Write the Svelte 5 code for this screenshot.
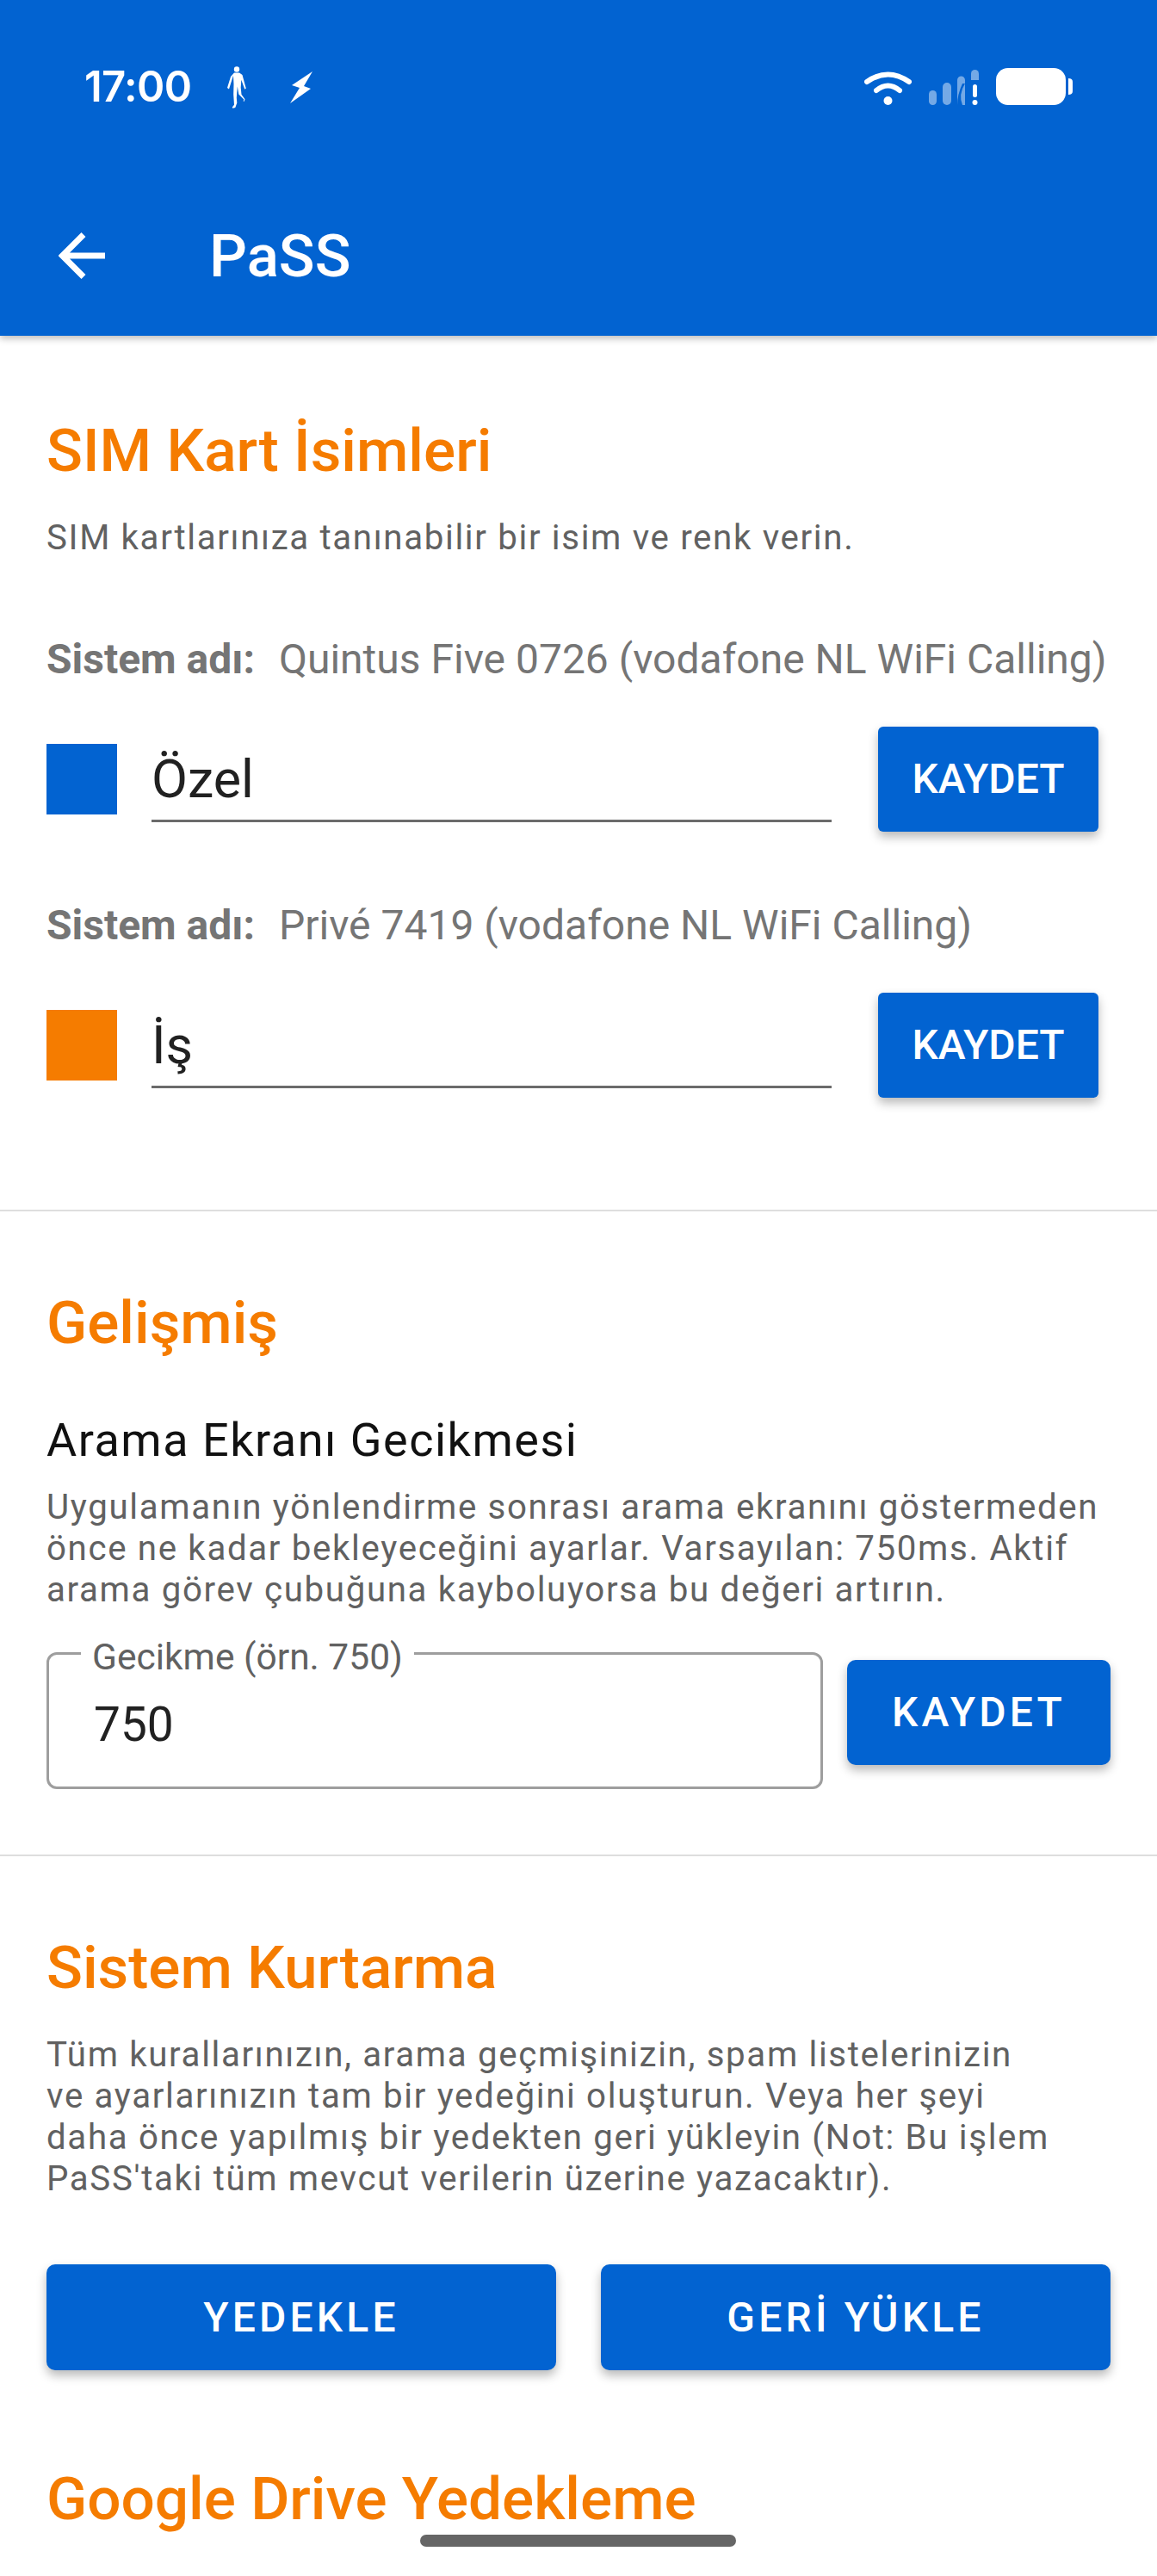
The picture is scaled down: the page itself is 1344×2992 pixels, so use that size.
<script>
  const sims = [
    { name: 'Quintus Five 0726 (vodafone NL WiFi Calling)', color: '#0263d1', value: 'Özel' },
    { name: 'Privé 7419 (vodafone NL WiFi Calling)', color: '#f57c00', value: 'İş' }
  ];
</script>

<div class="page">
  <header class="appbar">
    <div class="status">
      <span class="clock">17:00</span>
      <svg class="walker" width="24" height="52" viewBox="0 0 24 52" fill="#fff"><circle cx="12" cy="3.5" r="3.2"/><path d="M9 7.5h6l3.5 2.5 3.500 13 .8 2.5-1.500 1.200-4-11-.6 9 .8 8 4 5.500-1 2.800-.8-.6.6-2-6-6-1.500-9-1 13 .5 6-2 5.500-3 .8-.5-1.200 2.200-2.800-.8-12 .3-12-.5-10L3 26.500 1 25l4-13z"/></svg>
      <svg class="bolt" width="26" height="37" viewBox="0 0 26 37" fill="#fff"><path d="M26 0 2 16l9 3L0 37l24-17-8-3z"/></svg>
      <span class="spacer"></span>
      <svg class="wifi" width="55" height="41" viewBox="0 0 55 41" fill="none" stroke="#fff" stroke-linecap="round"><path d="M3 14Q27.500-3 52 14" stroke-width="6"/><path d="M14 24Q27.500 13 41 24" stroke-width="6"/><circle cx="27.500" cy="36" r="5" fill="#fff" stroke="none"/></svg>
      <svg class="signal" width="58" height="41" viewBox="0 0 58 41"><g fill="#fff" fill-opacity=".45"><rect x="0" y="24" width="9" height="17" rx="4.500"/><rect x="16" y="15" width="10" height="26" rx="5"/><path d="M33 12a4.500 4.500 0 0 1 9 0v29h-3q-5-12 3-25h-3q-6 13-6 25z"/><path d="M49 12V4.500a4.500 4.500 0 0 1 9 0V12z"/></g><rect x="51" y="17" width="5" height="15" rx="2.500" fill="#fff"/><circle cx="53.500" cy="38" r="3" fill="#fff"/></svg>
      <svg class="battery" width="89" height="43" viewBox="0 0 89 43" fill="#fff"><rect x="0" y="0" width="81" height="43" rx="14"/><path d="M84 12q5 0 5 4v11q0 4-5 4z"/></svg>
    </div>
    <div class="toolbar">
      <svg class="back" width="56" height="54" viewBox="0 0 56 54" fill="none" stroke="#fff" stroke-width="7"><path d="M54 27H5M29 2.500 4.500 27 29 51.500"/></svg>
      <h1>PaSS</h1>
    </div>
  </header>

  <section class="sim">
    <h2>SIM Kart İsimleri</h2>
    <p class="desc first">SIM kartlarınıza tanınabilir bir isim ve renk verin.</p>
    {#each sims as sim}
      <div class="sysname"><b>Sistem adı:</b><span>{sim.name}</span></div>
      <div class="simrow">
        <span class="swatch" style:background={sim.color}></span>
        <input class="line" value={sim.value} />
        <button class="btn small">KAYDET</button>
      </div>
    {/each}
  </section>

  <section class="adv">
    <h2>Gelişmiş</h2>
    <h3>Arama Ekranı Gecikmesi</h3>
    <p class="desc">Uygulamanın yönlendirme sonrası arama ekranını göstermeden önce ne kadar bekleyeceğini ayarlar. Varsayılan: 750ms. Aktif arama görev çubuğuna kayboluyorsa bu değeri artırın.</p>
    <div class="delay">
      <fieldset>
        <legend>Gecikme (örn. 750)</legend>
        <input value="750" />
      </fieldset>
      <button class="btn wide">KAYDET</button>
    </div>
  </section>

  <section class="rec">
    <h2>Sistem Kurtarma</h2>
    <p class="desc narrow">Tüm kurallarınızın, arama geçmişinizin, spam listelerinizin ve ayarlarınızın tam bir yedeğini oluşturun. Veya her şeyi daha önce yapılmış bir yedekten geri yükleyin (Not: Bu işlem PaSS'taki tüm mevcut verilerin üzerine yazacaktır).</p>
    <div class="pair">
      <button class="btn wide">YEDEKLE</button>
      <button class="btn wide">GERİ YÜKLE</button>
    </div>
    <h2 class="drive">Google Drive Yedekleme</h2>
  </section>

  <div class="pill"></div>
</div>

<style>
  :global(body) { margin: 0; background: #fff; }
  .page { position: relative; width: 1344px; height: 2992px; overflow: hidden; background: #fff; font-family: Roboto, "Liberation Sans", sans-serif; }
  .appbar { background: #0263d1; height: 390px; box-shadow: 0 3px 8px rgba(0,0,0,.28); position: relative; }
  .status { height: 210px; display: flex; align-items: flex-start; padding: 0 98px 0 98px; box-sizing: border-box; position: relative; }
  .clock { font: 600 49px/1 Inter, sans-serif; color: #fff; margin-top: 76px; letter-spacing: -.6px; width: 165px; }
  .walker { margin-top: 77px; }
  .bolt { margin: 83px 0 0 50px; }
  .spacer { flex: 1; }
  .wifi { margin-top: 81px; margin-right: 20px; }
  .signal { margin-top: 81px; margin-right: 20px; }
  .battery { margin-top: 79px; }
  .toolbar { height: 180px; display: flex; align-items: center; padding-left: 68px; margin-top: -3px; }
  .back { flex: none; }
  h1 { margin: 0 0 0 119px; font: 500 69px/1 Roboto, sans-serif; color: #fff; }
  h2 { margin: 0; font: 500 69.3px/76px Roboto, sans-serif; color: #f57c00; }
  section { padding: 0 54px; box-sizing: border-box; }
  .sim { height: 1017px; padding-top: 96px; border-bottom: 2px solid #dedede; }
  .desc { margin: 0; font: 400 40.25px/48px Roboto, sans-serif; letter-spacing: 1.65px; color: #616161; }
  .desc.first { margin-top: 39px; }
  .sysname { display: flex; gap: 28px; font: 400 48px/56px Roboto, sans-serif; color: #757575; }
  .sysname b { font-weight: 700; }
  .sim .first + .sysname { margin-top: 89px; }
  .simrow { display: flex; align-items: center; margin: 50px 0 81px; height: 122px; position: relative; }
  .swatch { width: 82px; height: 82px; flex: none; }
  .line { width: 790px; margin-left: 40px; height: 90px; box-sizing: border-box; padding: 0 0 8px; border: 0; border-bottom: 3px solid #6b6b6b; font: 400 61px/1 Roboto, sans-serif; color: #212121; background: none; outline: none; position: relative; top: 5px; }
  .btn { border: 0; background: #0263d1; color: #fff; border-radius: 6px; font: 500 48px/1 Roboto, sans-serif; box-shadow: 0 6px 12px rgba(0,0,0,.28); padding: 0; }
  .small { width: 256px; height: 122px; margin-left: 54px; flex: none; }
  .wide { height: 122px; letter-spacing: 4.2px; border-radius: 10px; }
  .adv { height: 749px; padding-top: 92px; border-bottom: 2px solid #dedede; }
  h3 { margin: 68px 0 0; font: 400 54px/60px Roboto, sans-serif; letter-spacing: 1.5px; color: #111; }
  .adv .desc { margin-top: 24px; }
  .delay { display: flex; margin-top: 22px; align-items: flex-start; }
  fieldset { width: 902px; height: 185px; box-sizing: border-box; margin: 0; padding: 0 0 0 37px; border: 3px solid #9e9e9e; border-radius: 12px; flex: none; }
  legend { padding: 8px 13px 0; font: 400 42.5px/47px Roboto, sans-serif; color: #616161; }
  fieldset input { border: 0; padding: 0; margin: 20px 0 0 15px; width: 800px; font: 400 55px/70px Roboto, sans-serif; color: #212121; background: none; outline: none; }
  .delay .btn { width: 306px; margin: 35px 0 0 28px; flex: none; }
  .rec { padding-top: 92px; }
  .rec .desc { margin-top: 39px; }
  .narrow { max-width: 1175px; }
  .pair { display: flex; justify-content: space-between; margin: 75px 0 0; }
  .pair .btn { width: 592px; height: 123px; }
  .drive { margin-top: 112px; }
  .pill { position: absolute; left: 488px; top: 2944px; width: 367px; height: 14px; border-radius: 7px; background: #666; }
</style>
